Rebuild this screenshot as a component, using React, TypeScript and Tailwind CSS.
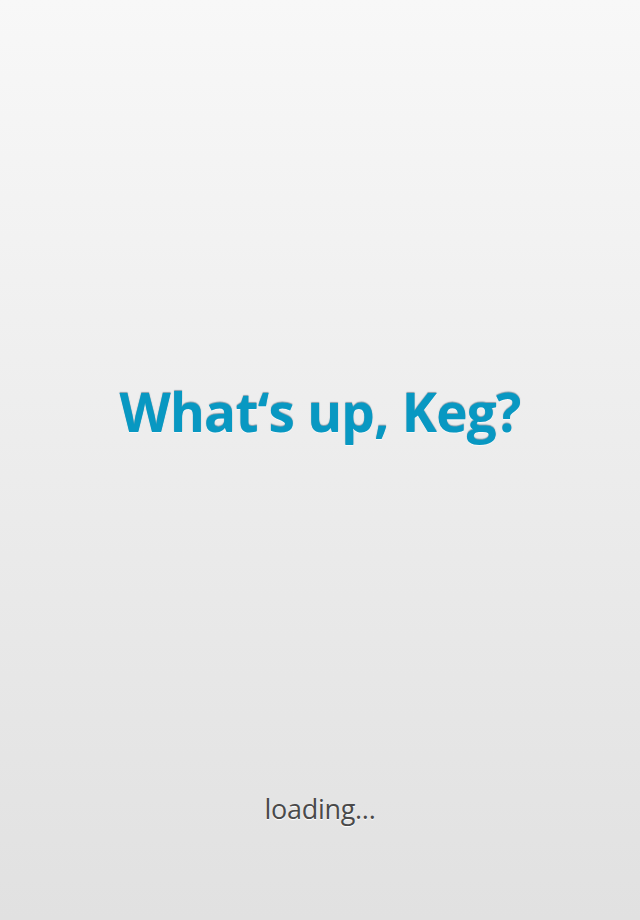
export default function App() {
  return (
    <div className="flex h-[920px] w-full flex-col items-center bg-gradient-to-b from-[#f8f8f8] to-[#e1e1e1] font-['Open_Sans','Noto_Sans',sans-serif]">
      <h1 className="mt-[374px] text-[53px] font-bold leading-[76px] tracking-[-0.7px] text-[#0898c2] [text-shadow:0_-1px_1px_rgba(0,60,90,0.45),0_1px_0_rgba(255,255,255,0.6)]">
        What‘s up, Keg?
      </h1>
      <p className="mt-[341px] text-[27px] leading-[36px] tracking-[-0.3px] text-[#4a4a4a] [text-shadow:0_1px_1px_#ffffff]">
        loading...
      </p>
    </div>
  );
}
